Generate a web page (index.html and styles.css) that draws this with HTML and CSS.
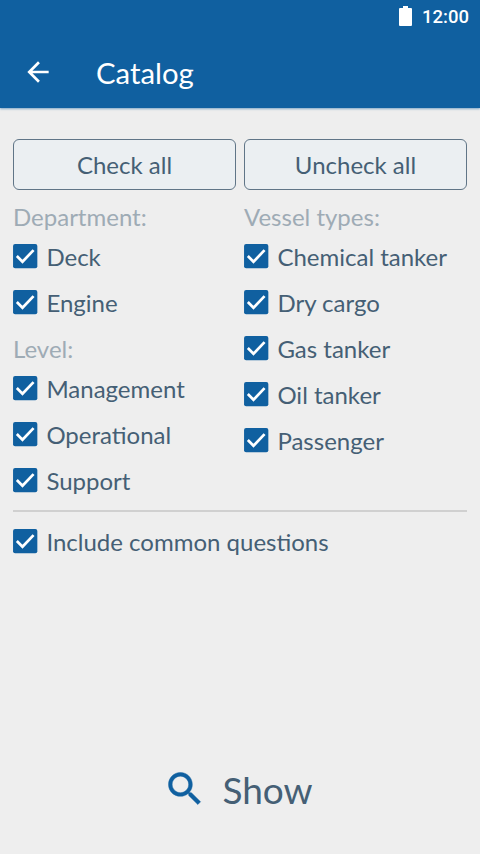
FILE: index.html
```html
<!DOCTYPE html>
<html lang="en">
<head>
<meta charset="utf-8">
<title>Catalog</title>
<link rel="stylesheet" href="styles.css">
</head>
<body>
<svg class="defs" width="0" height="0"><symbol id="check" viewBox="0 0 24 24"><rect x="3" y="3" width="18" height="18" rx="1.500"/><path d="M5.800 11.900l4.200 4.200 8.200-8.600" fill="none" stroke="#fff" stroke-width="2"/></symbol></svg>
<header class="header">
  <div class="status"><svg class="battery" viewBox="0 0 13 20"><path d="M4 0h5v2h3q1 0 1 1v16q0 1-1 1H1q-1 0-1-1V3q0-1 1-1h3z"/></svg><span>12:00</span></div>
  <div class="toolbar"><svg class="back" viewBox="0 0 24 24"><path d="M20 11H7.830l5.590-5.590L12 4l-8 8 8 8 1.410-1.410L7.830 13H20v-2z"/></svg><h1 class="title">Catalog</h1></div>
</header>
<main class="main">
  <div class="columns">
    <section class="column">
      <button class="button">Check all</button>
      <h2 class="label">Department:</h2>
      <div class="option"><svg><use href="#check"/></svg><span>Deck</span></div>
      <div class="option"><svg><use href="#check"/></svg><span>Engine</span></div>
      <h2 class="label">Level:</h2>
      <div class="option"><svg><use href="#check"/></svg><span>Management</span></div>
      <div class="option"><svg><use href="#check"/></svg><span>Operational</span></div>
      <div class="option"><svg><use href="#check"/></svg><span>Support</span></div>
    </section>
    <section class="column">
      <button class="button">Uncheck all</button>
      <h2 class="label">Vessel types:</h2>
      <div class="option"><svg><use href="#check"/></svg><span>Chemical tanker</span></div>
      <div class="option"><svg><use href="#check"/></svg><span>Dry cargo</span></div>
      <div class="option"><svg><use href="#check"/></svg><span>Gas tanker</span></div>
      <div class="option"><svg><use href="#check"/></svg><span>Oil tanker</span></div>
      <div class="option"><svg><use href="#check"/></svg><span>Passenger</span></div>
    </section>
  </div>
  <div class="common"><div class="option"><svg><use href="#check"/></svg><span>Include common questions</span></div></div>
</main>
<footer class="show"><svg viewBox="0 0 24 24"><path d="M15.500 14h-.79l-.28-.27C15.410 12.590 16 11.110 16 9.500 16 5.910 13.090 3 9.500 3S3 5.910 3 9.500 5.910 16 9.500 16c1.610 0 3.090-.59 4.230-1.570l.27.28v.79l5 4.990L20.490 19l-4.990-5zm-6 0C7.010 14 5 11.990 5 9.500S7.010 5 9.500 5 14 7.010 14 9.500 11.990 14 9.500 14z"/></svg><span>Show</span></footer>
</body>
</html>
```
FILE: styles.css
```css
* { box-sizing: border-box; }
body { margin: 0; height: 854px; display: flex; flex-direction: column; background: #eee; color: #455f75; font-family: Lato, sans-serif; font-size: 24px; overflow: hidden; }
.defs { position: absolute; }
.header { height: 108px; flex: none; background: #1060a0; color: #fff; box-shadow: 0 1px 2px rgba(16,96,160,.5); }
.header svg { fill: #fff; }
.status { height: 36px; display: flex; justify-content: flex-end; align-items: flex-start; padding: 6px 11px 0 0; gap: 10px; font: 500 18.500px/22px Roboto, sans-serif; }
.battery { width: 13px; height: 20px; }
.toolbar { height: 72px; display: flex; align-items: center; padding-left: 22px; }
.back { width: 32px; height: 32px; }
.title { margin: 2px 0 0 42px; font-size: 29.300px; line-height: 36px; font-weight: 400; }
.main { flex: 1; padding: 31px 13px 0; }
.columns { display: flex; gap: 8px; height: 373px; border-bottom: 2px solid #d0d0d0; }
.column { flex: 1; }
.button { display: block; width: 100%; height: 51px; padding: 0; border: 1px solid #607587; border-radius: 6px; background: #ebeff2; color: inherit; font: inherit; }
.label { margin: 16px 0 11px; font-size: 24px; line-height: 31px; font-weight: 400; color: #9eabb5; }
.option + .label { margin-top: -2px; padding-top: 0; }
.button + .label { margin: 11px 0 11px; }
.option { display: flex; align-items: center; height: 28px; margin-bottom: 18.100px; white-space: nowrap; }
.option svg { width: 32.400px; height: 32.400px; margin: -2px 5px 0 -4px; fill: #1060a0; flex: none; }
.option span { line-height: 28px; }
.common { padding-top: 16px; }
.show { height: 130px; display: flex; align-items: center; justify-content: center; gap: 15px; padding-right: 4px; font-size: 37px; }
.show svg { width: 44px; height: 44px; margin-top: -1px; fill: #1060a0; stroke: #1060a0; stroke-width: .25; }
```
